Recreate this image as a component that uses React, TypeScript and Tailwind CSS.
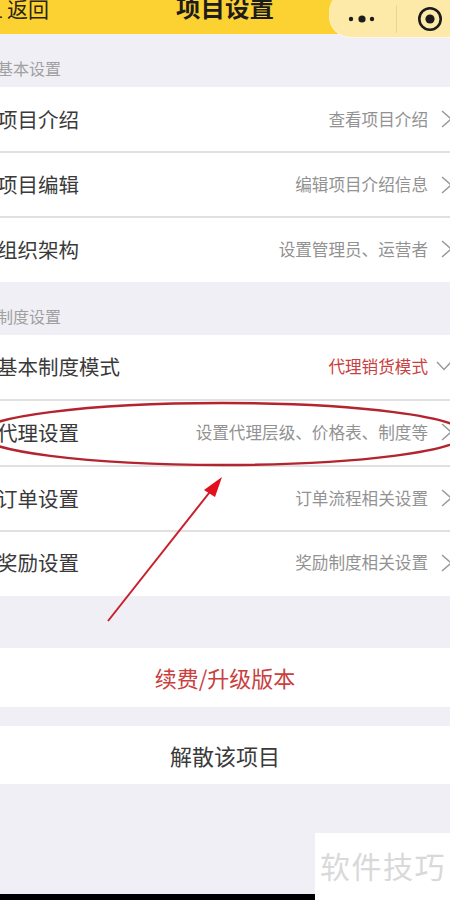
const Chevron = ({ down = false, color = "#9a9a9a" }: { down?: boolean; color?: string }) => (
  <svg width="12" height="18" viewBox="0 0 12 18" className="shrink-0 overflow-visible">
    {down ? (
      <path d="M-4 5 L3 12.5 L10 5" fill="none" stroke={color} strokeWidth="1.5" />
    ) : (
      <path d="M1 1 L10 9 L1 17" fill="none" stroke={color} strokeWidth="1.5" />
    )}
  </svg>
);

const Row = ({ title, value, h, red = false, down = false }: { title: string; value: string; h: string; red?: boolean; down?: boolean }) => (
  <div className={`flex items-center justify-between ${h}`}>
    <span className="-ml-[3px] text-[20.5px] leading-none text-[#3a3a3a]">{title}</span>
    <div className="-mr-[3px] flex items-center gap-[13px]">
      <span className={`text-[16.6px] leading-none ${red ? "text-[#c8403f]" : "text-[#929292]"}`}>{value}</span>
      <Chevron down={down} />
    </div>
  </div>
);

const Label = ({ text, h }: { text: string; h: string }) => (
  <div className={`flex items-end pb-[11px] text-[16px] leading-none text-[#a0a0a0] ${h}`}>
    <span className="-ml-[3px]">{text}</span>
  </div>
);

const divided = "border-b-2 border-[#e0e0e0]";

export default function App() {
  return (
    <div
      className="relative h-[900px] w-[450px] overflow-hidden bg-[#f0eff5]"
      style={{ fontFamily: '"Noto Sans CJK SC", "Liberation Sans", sans-serif' }}
    >
      <header className="relative flex h-[34px] items-end justify-between overflow-hidden bg-[#fcd232] pb-[15px]">
        <svg width="3" height="6" viewBox="0 0 3 6" className="absolute bottom-[16px] left-0">
          <path d="M0 5 L2 5.5" fill="none" stroke="#2a2410" strokeWidth="1.5" />
        </svg>
        <span className="ml-[7px] text-[21px] leading-none text-[#2a2410]">返回</span>
        <span className="absolute bottom-[15px] left-[176px] text-[24.5px] font-bold leading-none text-[#1c1c1c]">项目设置</span>
      </header>

      <div className="absolute left-[329px] top-[-10px] flex h-[47px] w-[140px] items-center rounded-[22px] bg-[#fdeaa9] pt-[10px] shadow-[0_1px_0_#fbf7e8]">
        <svg width="30" height="10" viewBox="0 0 30 10" className="ml-[18px]">
          <circle cx="4" cy="5" r="2.2" fill="#1c1c1c" />
          <circle cx="15" cy="5" r="3.6" fill="#1c1c1c" />
          <circle cx="25" cy="5" r="2.2" fill="#1c1c1c" />
        </svg>
        <div className="ml-[19px] h-[28px] w-px bg-[#ecd68f]" />
        <svg width="26" height="26" viewBox="0 0 26 26" className="ml-[20px]">
          <circle cx="13" cy="13" r="10.7" fill="none" stroke="#1c1c1c" strokeWidth="2.6" />
          <circle cx="13" cy="13" r="4.6" fill="#1c1c1c" />
        </svg>
      </div>

      <Label text="基本设置" h="h-[53px]" />
      <section className="bg-white">
        <Row title="项目介绍" value="查看项目介绍" h={`h-[66px] ${divided}`} />
        <Row title="项目编辑" value="编辑项目介绍信息" h={`h-[65px] ${divided}`} />
        <Row title="组织架构" value="设置管理员、运营者" h="h-[64px] pb-[2px]" />
      </section>

      <Label text="制度设置" h="h-[53px]" />
      <section className="bg-white">
        <Row title="基本制度模式" value="代理销货模式" red down h={`h-[66px] pb-[2px] ${divided}`} />
        <Row title="代理设置" value="设置代理层级、价格表、制度等" h={`h-[66px] pb-[2px] ${divided}`} />
        <Row title="订单设置" value="订单流程相关设置" h={`h-[65px] pb-[1px] ${divided}`} />
        <Row title="奖励设置" value="奖励制度相关设置" h="h-[64px] pb-[3px]" />
      </section>

      <div className="mt-[52px] flex h-[59px] items-center justify-center bg-white text-[22px] text-[#c9403f]">续费/升级版本</div>
      <div className="mt-[19px] flex h-[58px] items-center justify-center bg-white text-[22px] text-[#3a3a3a]">解散该项目</div>

      <svg width="450" height="240" viewBox="0 400 450 240" className="absolute left-0 top-[400px]">
        <ellipse cx="222" cy="434" rx="243" ry="31" fill="none" stroke="#b3242f" strokeWidth="2.4" />
        <path d="M108 621 L213 488" fill="none" stroke="#c8202c" strokeWidth="2" />
        <path d="M222 477 L204 490 L215 497 Z" fill="#e0101c" />
      </svg>

      <div className="absolute bottom-0 left-0 h-[6px] w-full bg-black" />
      <div className="absolute bottom-0 right-0 flex h-[67px] w-[135px] items-start bg-white pl-[5px] pt-[17px] text-[30px] leading-none tracking-[1.5px] text-[#d9d9d9]">
        软件技巧
      </div>
    </div>
  );
}
